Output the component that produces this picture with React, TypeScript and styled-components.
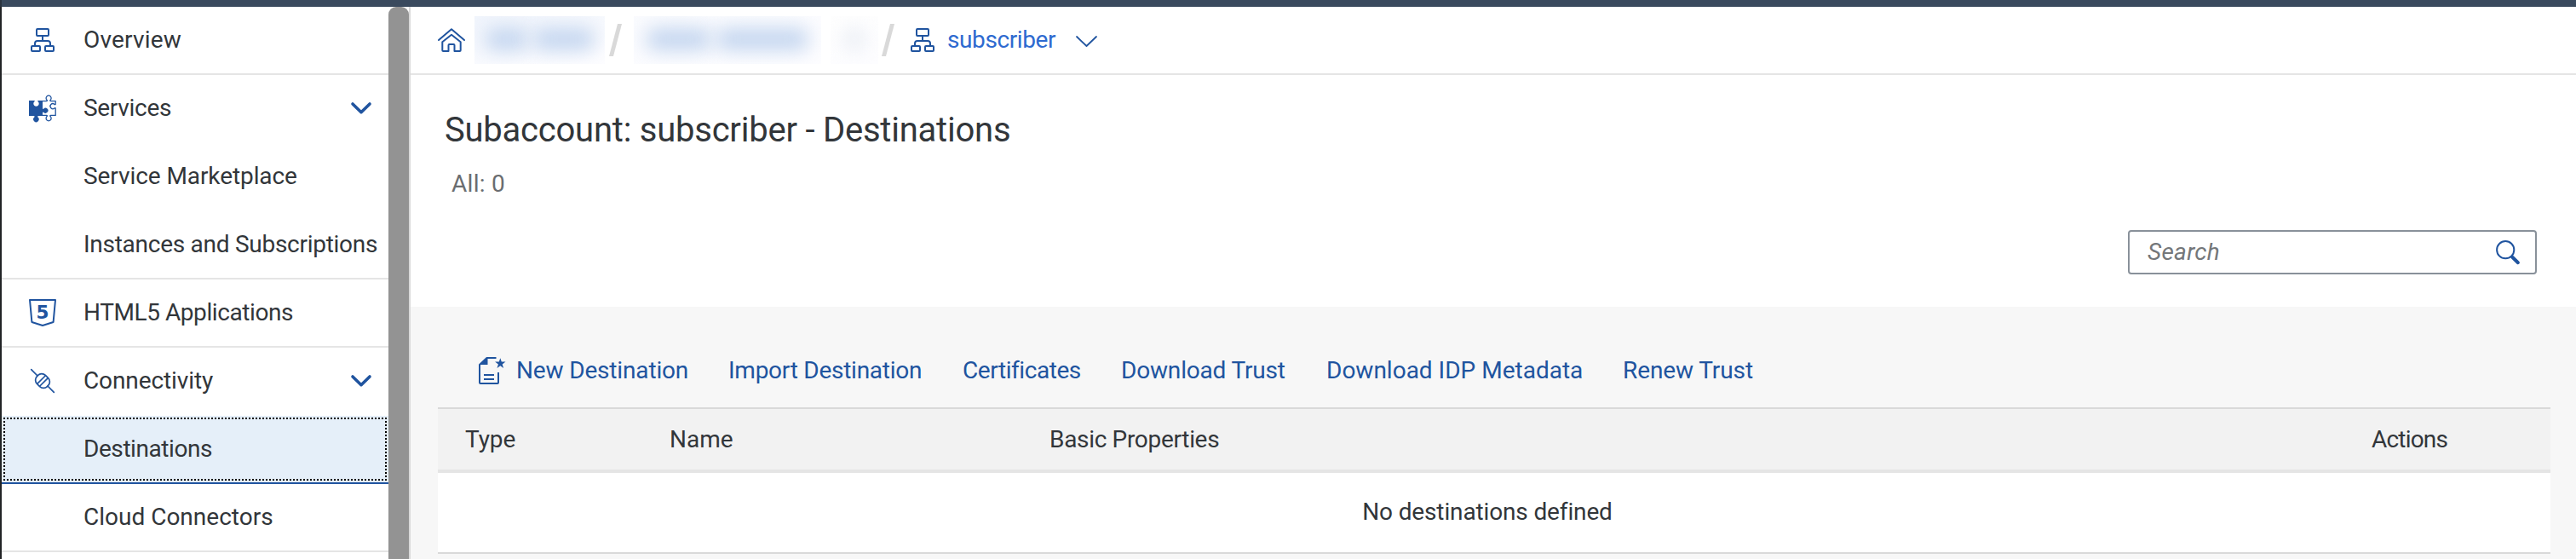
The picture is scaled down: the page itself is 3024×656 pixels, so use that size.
import React from 'react';
import styled, { createGlobalStyle, css } from 'styled-components';

const color = {
  link: '#20549f',
  linkActive: '#2e6ad0',
  text: '#32363a',
  muted: '#6a6d70',
  line: '#e5e5e5',
  lineStrong: '#d9d9d9',
};

const GlobalStyle = createGlobalStyle`
  * { box-sizing: border-box; }
  body {
    margin: 0;
    background: #fff;
    color: ${color.text};
    font: 28px/40px Roboto, "Liberation Sans", sans-serif;
  }
  svg { display: block; flex: none; overflow: visible; }
`;

const Page = styled.div`
  display: flex;
  flex-direction: column;
  width: 3024px;
  height: 656px;
  overflow: hidden;
`;

const ShellBar = styled.div`
  flex: none;
  height: 8px;
  border-left: 2px solid #2b3440;
  background: #3a4a5e;
`;

const Body = styled.div`
  display: flex;
  flex: 1;
  min-height: 0;
  border-left: 2px solid #222426;
`;

const Sidebar = styled.nav`
  flex: none;
  width: 454px;
`;

const focusRing = css`
  &::after {
    content: '';
    position: absolute;
    inset: 2px;
    background:
      repeating-linear-gradient(90deg, #000 0 2px, transparent 2px 4px) top / 100% 2px no-repeat,
      repeating-linear-gradient(90deg, #000 0 2px, transparent 2px 4px) bottom / 100% 2px no-repeat,
      repeating-linear-gradient(180deg, #000 0 2px, transparent 2px 4px) left / 2px 100% no-repeat,
      repeating-linear-gradient(180deg, #000 0 2px, transparent 2px 4px) right / 2px 100% no-repeat;
  }
`;

const NavRow = styled.div<{ $divider?: boolean; $selected?: boolean }>`
  position: relative;
  display: flex;
  align-items: center;
  height: 80px;
  padding-right: 20px;
  border-bottom: 2px solid
    ${(p) => (p.$selected ? color.link : p.$divider ? color.line : 'transparent')};
  background: ${(p) => (p.$selected ? '#e5eff9' : '#fff')};
  background-clip: padding-box;
  ${(p) => p.$selected && focusRing}
`;

const NavIcon = styled.span`
  display: flex;
  justify-content: center;
  flex: none;
  width: 96px;
`;

const Label = styled.span<{ $track?: number }>`
  white-space: nowrap;
  letter-spacing: ${(p) => p.$track ?? 0}px;
`;

const NavLabel = styled(Label)`
  flex: 1;
`;

const ScrollTrack = styled.div`
  flex: none;
  width: 26px;
  border-right: 2px solid ${color.lineStrong};
`;

const ScrollThumb = styled.div`
  width: 24px;
  height: 100%;
  border-radius: 9px 9px 0 0;
  background: #939393;
`;

const Main = styled.main`
  flex: 1;
  display: flex;
  flex-direction: column;
  background: #f7f7f7;
`;

const Breadcrumbs = styled.div`
  display: flex;
  align-items: center;
  height: 80px;
  padding-left: 32px;
  border-bottom: 2px solid ${color.line};
  background: #fff;
`;

const Redacted = styled.span<{ $width: number; $before: number; $tint: string }>`
  display: flex;
  align-items: center;
  justify-content: center;
  gap: 6px;
  width: ${(p) => p.$width}px;
  height: 56px;
  padding-bottom: 2px;
  margin-left: ${(p) => p.$before}px;
  overflow: hidden;
  background: linear-gradient(165deg, ${(p) => p.$tint}, #fdfdff 90%);
`;

const Smudge = styled.i<{ $width: number; $fill: string }>`
  width: ${(p) => p.$width}px;
  height: 26px;
  border-radius: 10px;
  background: ${(p) => p.$fill};
  filter: blur(11px);
`;

const Slash = styled.span<{ $before: number }>`
  width: 15px;
  margin-left: ${(p) => p.$before}px;
`;

const CurrentCrumb = styled.span`
  display: flex;
  align-items: center;
  margin-left: 19px;
  color: ${color.linkActive};
`;

const CrumbLabel = styled(Label)`
  width: 151px;
  padding-left: 15px;
  margin-right: 15px;
`;

const CrumbChevron = styled.span`
  padding-top: 2px;
`;

const Header = styled.header`
  height: 272px;
  padding: 41px 46px 0 40px;
  background: #fff;
`;

const Title = styled.h1`
  margin: 0;
  font-size: 40px;
  font-weight: 400;
  line-height: 48px;
  letter-spacing: -0.23px;
`;

const Count = styled.p`
  margin: 19px 0 0 8px;
  color: ${color.muted};
  letter-spacing: 0.3px;
`;

const SearchRow = styled.div`
  display: flex;
  justify-content: flex-end;
  margin-top: 34px;
`;

const SearchBox = styled.div`
  display: flex;
  align-items: center;
  justify-content: space-between;
  width: 480px;
  height: 52px;
  padding: 0 18px 0 21px;
  border: 2px solid #89919a;
  border-radius: 4px;
  color: #74777a;
  font-style: italic;
`;

const Toolbar = styled.div`
  display: flex;
  align-items: center;
  gap: 48px;
  height: 118px;
  padding: 32px 0 0 80px;
  color: ${color.link};
`;

const ToolButton = styled.span<{ $width: number }>`
  display: flex;
  align-items: center;
  gap: 12px;
  width: ${(p) => p.$width}px;
`;

const Table = styled.div`
  margin: 0 30px 0 32px;
  border-top: 2px solid ${color.lineStrong};
  border-bottom: 2px solid ${color.lineStrong};
`;

const HeadRow = styled.div`
  display: grid;
  grid-template-columns: 240px 446px 1552px 1fr;
  align-items: center;
  height: 75px;
  padding-left: 32px;
  border-bottom: 4px solid ${color.line};
  background: #f2f2f2;
`;

const EmptyRow = styled.div`
  display: flex;
  align-items: center;
  justify-content: center;
  height: 93px;
  padding: 0 16px 2px 0;
  background: #fff;
`;

const stroke = {
  fill: 'none',
  stroke: color.link,
  strokeLinecap: 'round' as const,
  strokeLinejoin: 'round' as const,
};

const OrgIcon = () => (
  <svg width="28" height="28" viewBox="0 0 28 28" {...stroke} strokeWidth="2">
    <rect x="7" y="1" width="14" height="8" rx="1" />
    <path d="M14 9v6M5 20v-2a3 3 0 0 1 3-3h12a3 3 0 0 1 3 3v2" />
    <rect x="1" y="21" width="10" height="6" rx="1" />
    <rect x="17" y="21" width="10" height="6" rx="1" />
  </svg>
);

const PuzzleIcon = () => (
  <svg width="32" height="32" viewBox="0 0 32 32">
    <path
      fill={color.link}
      d="M0 7h6.200c.6 0 .7.5.4 1a3.200 3.200 0 1 0 3.800 0c-.3-.5-.2-1 .4-1H16v9.700h1.200a3 3 0 1 1 0 4H16V25h-5.600v1.500a3.200 3.200 0 1 1-4 0V25H0z"
    />
    <path
      {...stroke}
      strokeWidth="1.300"
      d="M16 7.600h4.600c.9 0 1-.6.5-1.200a3 3 0 1 1 4 0c-.5.6-.4 1.200.5 1.200h5.600v3.300c0 1-.6 1-1.200.5a3 3 0 1 0 0 4.500c.6-.5 1.200-.4 1.200.5v8h-5.600c-.9 0-1 .6-.5 1.200a3 3 0 1 1-4 0c.5-.6.4-1.200-.5-1.200H16"
    />
  </svg>
);

const Html5Icon = () => (
  <svg width="32" height="32" viewBox="0 0 32 32">
    <path {...stroke} strokeWidth="2" d="M1 1h30l-2.400 26L16 31 3.400 27z" />
    <text
      x="16"
      y="23"
      textAnchor="middle"
      fill={color.link}
      fontFamily="DejaVu Sans, sans-serif"
      fontWeight="700"
      fontSize="21.500"
    >
      5
    </text>
  </svg>
);

const PlugIcon = () => (
  <svg width="28" height="28" viewBox="0 0 28 28" {...stroke} strokeWidth="1.700">
    <g transform="rotate(45 14 14)">
      <rect x="5.500" y="7" width="17" height="14" rx="6.200" />
      <path d="M12 7.500v13M16 7.500v13M-4.800 14H5.500M22.500 14h10.300" />
    </g>
  </svg>
);

const NavChevron = () => (
  <svg width="24" height="14" viewBox="0 0 24 14" {...stroke} strokeWidth="3.600">
    <path d="M2 2l10 9.700L22 2" />
  </svg>
);

const ThinChevron = () => (
  <svg width="25" height="13" viewBox="0 0 25 13" {...stroke} strokeWidth="1.800">
    <path d="M1 1l11.500 11L24 1" />
  </svg>
);

const HomeIcon = () => (
  <svg width="32" height="28" viewBox="0 0 32 28" {...stroke} strokeWidth="2">
    <path d="M1 14L16 1.200 31 14" />
    <path d="M5.300 16.200L16 7.800l10.700 8.400V26q0 1-1 1H19.500v-7a1 1 0 0 0-1-1h-5a1 1 0 0 0-1 1v7H6.300q-1 0-1-1z" />
  </svg>
);

const SlashIcon = () => (
  <svg width="15" height="38" viewBox="0 0 15 38">
    <path fill={color.lineStrong} d="M10 0h5L5 38H0z" />
  </svg>
);

const NewDocIcon = () => (
  <svg width="32" height="32" viewBox="0 0 32 32">
    <path {...stroke} strokeWidth="2" strokeLinecap="butt" d="M20.500 1H9.500L1 9v21q0 1 1 1h20q1 0 1-1V18" />
    <path fill={color.link} d="M1 9.600L10 .5h.5v8.600h-9.500z" />
    <path {...stroke} strokeWidth="2" strokeLinecap="butt" d="M6 21h12M6 26h12" />
    <path
      fill={color.link}
      d="M25.300 1.300l1.500 4.300h4.700l-3.800 2.800 1.400 4.500-3.800-2.700-3.800 2.700 1.400-4.500-3.800-2.800h4.700z"
    />
  </svg>
);

const SearchIcon = () => (
  <svg width="28" height="28" viewBox="0 0 28 28" {...stroke}>
    <circle cx="11.200" cy="11.200" r="10.100" strokeWidth="2" />
    <path strokeWidth="4" d="M19.300 19.800l6.600 6.400" />
  </svg>
);

type NavItem = {
  label: string;
  track: number;
  icon?: React.ReactNode;
  expandable?: boolean;
  divider?: boolean;
  selected?: boolean;
};

const navItems: NavItem[] = [
  { label: 'Overview', track: 0.2, icon: <OrgIcon />, divider: true },
  { label: 'Services', track: -0.3, icon: <PuzzleIcon />, expandable: true },
  { label: 'Service Marketplace', track: -0.08 },
  { label: 'Instances and Subscriptions', track: -0.27, divider: true },
  { label: 'HTML5 Applications', track: -0.42, icon: <Html5Icon />, divider: true },
  { label: 'Connectivity', track: -0.1, icon: <PlugIcon />, expandable: true },
  { label: 'Destinations', track: -0.43, selected: true },
  { label: 'Cloud Connectors', track: 0, divider: true },
];

const actions = [
  { label: 'New Destination', width: 245, track: -0.16, icon: <NewDocIcon /> },
  { label: 'Import Destination', width: 227, track: -0.26 },
  { label: 'Certificates', width: 138, track: -0.44 },
  { label: 'Download Trust', width: 193, track: -0.18 },
  { label: 'Download IDP Metadata', width: 300, track: 0 },
  { label: 'Renew Trust', width: 154, track: -0.1 },
];

const columns = [
  { label: 'Type', track: -0.07 },
  { label: 'Name', track: 0 },
  { label: 'Basic Properties', track: -0.32 },
  { label: 'Actions', track: -0.8 },
];

export default function App() {
  return (
    <Page>
      <GlobalStyle />
      <ShellBar />
      <Body>
        <Sidebar>
          {navItems.map((item) => (
            <NavRow key={item.label} $divider={item.divider} $selected={item.selected}>
              <NavIcon>{item.icon}</NavIcon>
              <NavLabel $track={item.track}>{item.label}</NavLabel>
              {item.expandable && <NavChevron />}
            </NavRow>
          ))}
        </Sidebar>
        <ScrollTrack>
          <ScrollThumb />
        </ScrollTrack>
        <Main>
          <Breadcrumbs>
            <HomeIcon />
            <Redacted $width={153} $before={11} $tint="#f1f5fc">
              <Smudge $width={50} $fill="#c3d5ef" />
              <Smudge $width={72} $fill="#c3d5ef" />
            </Redacted>
            <Slash $before={5}>
              <SlashIcon />
            </Slash>
            <Redacted $width={220} $before={14} $tint="#fafbfe">
              <Smudge $width={76} $fill="#c3d5ef" />
              <Smudge $width={108} $fill="#c3d5ef" />
            </Redacted>
            <Redacted $width={56} $before={11} $tint="#fefefe">
              <Smudge $width={24} $fill="#e9edf4" />
            </Redacted>
            <Slash $before={4}>
              <SlashIcon />
            </Slash>
            <CurrentCrumb>
              <OrgIcon />
              <CrumbLabel $track={-0.4}>subscriber</CrumbLabel>
              <CrumbChevron>
                <ThinChevron />
              </CrumbChevron>
            </CurrentCrumb>
          </Breadcrumbs>
          <Header>
            <Title>Subaccount: subscriber - Destinations</Title>
            <Count>All: 0</Count>
            <SearchRow>
              <SearchBox>
                <Label $track={0.28}>Search</Label>
                <SearchIcon />
              </SearchBox>
            </SearchRow>
          </Header>
          <Toolbar>
            {actions.map((a) => (
              <ToolButton key={a.label} $width={a.width}>
                {a.icon}
                <Label $track={a.track}>{a.label}</Label>
              </ToolButton>
            ))}
          </Toolbar>
          <Table>
            <HeadRow>
              {columns.map((c) => (
                <Label key={c.label} $track={c.track}>
                  {c.label}
                </Label>
              ))}
            </HeadRow>
            <EmptyRow>
              <Label $track={-0.14}>No destinations defined</Label>
            </EmptyRow>
          </Table>
        </Main>
      </Body>
    </Page>
  );
}
